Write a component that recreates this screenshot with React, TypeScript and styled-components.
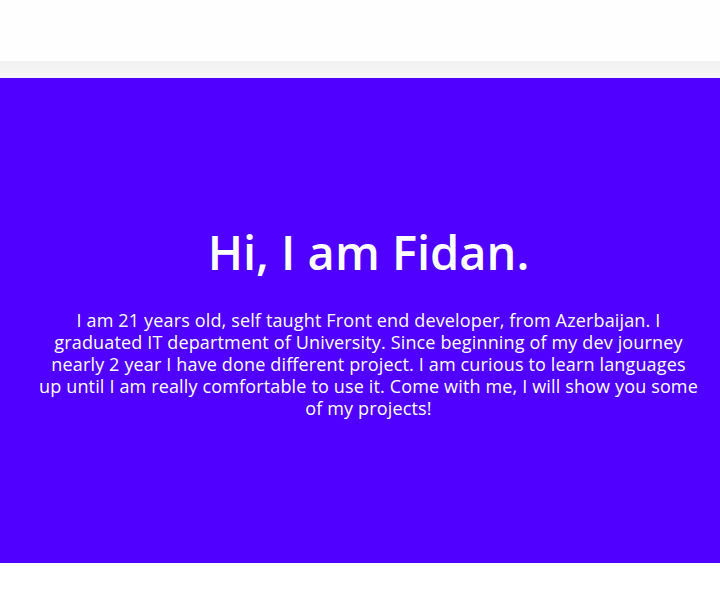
import React from "react";
import styled, { createGlobalStyle } from "styled-components";

const Global = createGlobalStyle`
  html, body { margin: 0; padding: 0; background: #ffffff; }
  body { font-family: "Open Sans", "Liberation Sans", sans-serif; }
`;

const Header = styled.header`
  height: 61px;
  background: #fefefe;
`;

const Band = styled.div`
  height: 17px;
  background: linear-gradient(#f1f1f1, #f7f7f7);
`;

const Hero = styled.section`
  height: 485px;
  background: #5000ff;
  color: #ffffff;
  display: flex;
  flex-direction: column;
  align-items: center;
  justify-content: center;
  padding: 0 20px 0 37px;
  box-sizing: border-box;
  text-align: center;
`;

const Title = styled.h1`
  margin: 0 0 27px;
  font-size: 47px;
  line-height: 60px;
  font-weight: 600;
`;

const Text = styled.p`
  margin: 0;
  font-size: 18px;
  line-height: 22px;
  letter-spacing: 0.15px;
  max-width: 659px;
`;

export default function App() {
  return (
    <>
      <Global />
      <Header />
      <Band />
      <Hero>
        <Title>Hi, I am Fidan.</Title>
        <Text>
          I am 21 years old, self taught Front end developer, from Azerbaijan. I
          graduated IT department of University. Since beginning of my dev journey
          nearly 2 year I have done different project. I am curious to learn languages
          up until I am really comfortable to use it. Come with me, I will show you some
          of my projects!
        </Text>
      </Hero>
    </>
  );
}
